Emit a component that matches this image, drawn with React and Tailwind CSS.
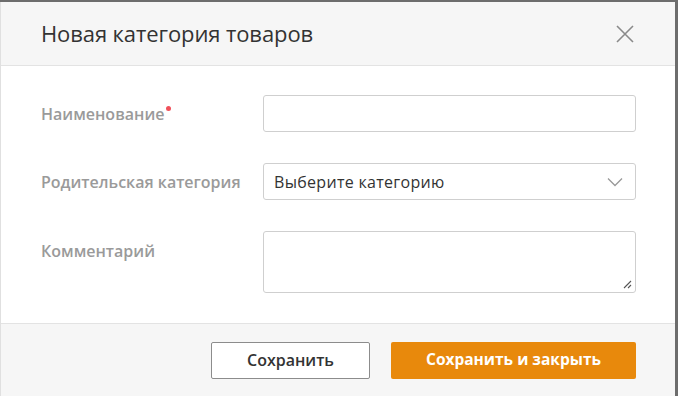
import React from "react";

const Field = ({ label, required, children, className = "" }) => (
  <div className={`flex ${className}`}>
    <div className="w-[222px] shrink-0 text-[16px] font-semibold leading-6 text-[#9a9a9a]">
      {label}
      {required && <span className="relative -top-[9px] ml-[2px] inline-block h-[5px] w-[5px] rounded-full bg-[#f0505a]" />}
    </div>
    <div className="flex-1">{children}</div>
  </div>
);

const App = () => {
  return (
    <div className="h-[396px] w-[678px] bg-[#6d6d6d] pt-[2px] pr-[3px] font-['Open_Sans',sans-serif]">
      <div className="flex h-[394px] flex-col border-l border-[#e0e0e0] bg-white">
        <div className="flex h-[64px] items-center justify-between border-b border-[#e3e3e3] bg-[#f6f6f6] pl-[40px] pr-[40px]">
          <h1 className="text-[22px] font-normal tracking-[-0.1px] text-[#333]">Новая категория товаров</h1>
          <svg width="20" height="20" viewBox="0 0 20 20" className="text-[#8a8a8a]">
            <path d="M2 2 L18 18 M18 2 L2 18" stroke="currentColor" strokeWidth="1.6" fill="none" />
          </svg>
        </div>

        <div className="flex-1 px-[40px] pt-[29px]">
          <Field label="Наименование" required className="items-center">
            <input className="h-[37px] w-[373px] rounded-[3px] border border-[#cfcfcf] bg-white" />
          </Field>
          <Field label="Родительская категория" className="mt-[31px] items-center">
            <div className="flex h-[37px] w-[373px] items-center justify-between rounded-[3px] border border-[#cfcfcf] bg-white pl-[10px] pr-[12px] text-[16px] tracking-[0.3px] text-[#333]">
              <span>Выберите категорию</span>
              <svg width="16" height="10" viewBox="0 0 16 10" className="text-[#999]">
                <path d="M1 1.5 L8 8.5 L15 1.5" stroke="currentColor" strokeWidth="1.3" fill="none" />
              </svg>
            </div>
          </Field>
          <Field label="Комментарий" className="mt-[39px] items-start">
            <div className="relative -mt-[8px] h-[62px] w-[373px] rounded-[3px] border border-[#cfcfcf] bg-white">
              <svg width="10" height="10" viewBox="0 0 10 10" className="absolute bottom-[3px] right-[3px] text-[#555]">
                <path d="M9 2 L2 9 M9 6 L6 9" stroke="currentColor" strokeWidth="1.1" fill="none" />
              </svg>
            </div>
          </Field>
        </div>

        <div className="flex h-[73px] items-center justify-end gap-[21px] border-t border-[#e3e3e3] bg-[#f6f6f6] pr-[39px]">
          <button className="h-[37px] w-[159px] rounded-[2px] border border-[#8c8c8c] bg-white text-[16px] font-semibold text-[#333]">
            Сохранить
          </button>
          <button className="h-[37px] w-[245px] rounded-[2px] bg-[#e8890c] text-[15.5px] font-bold text-white">
            Сохранить и закрыть
          </button>
        </div>
      </div>
    </div>
  );
};

export default App;
